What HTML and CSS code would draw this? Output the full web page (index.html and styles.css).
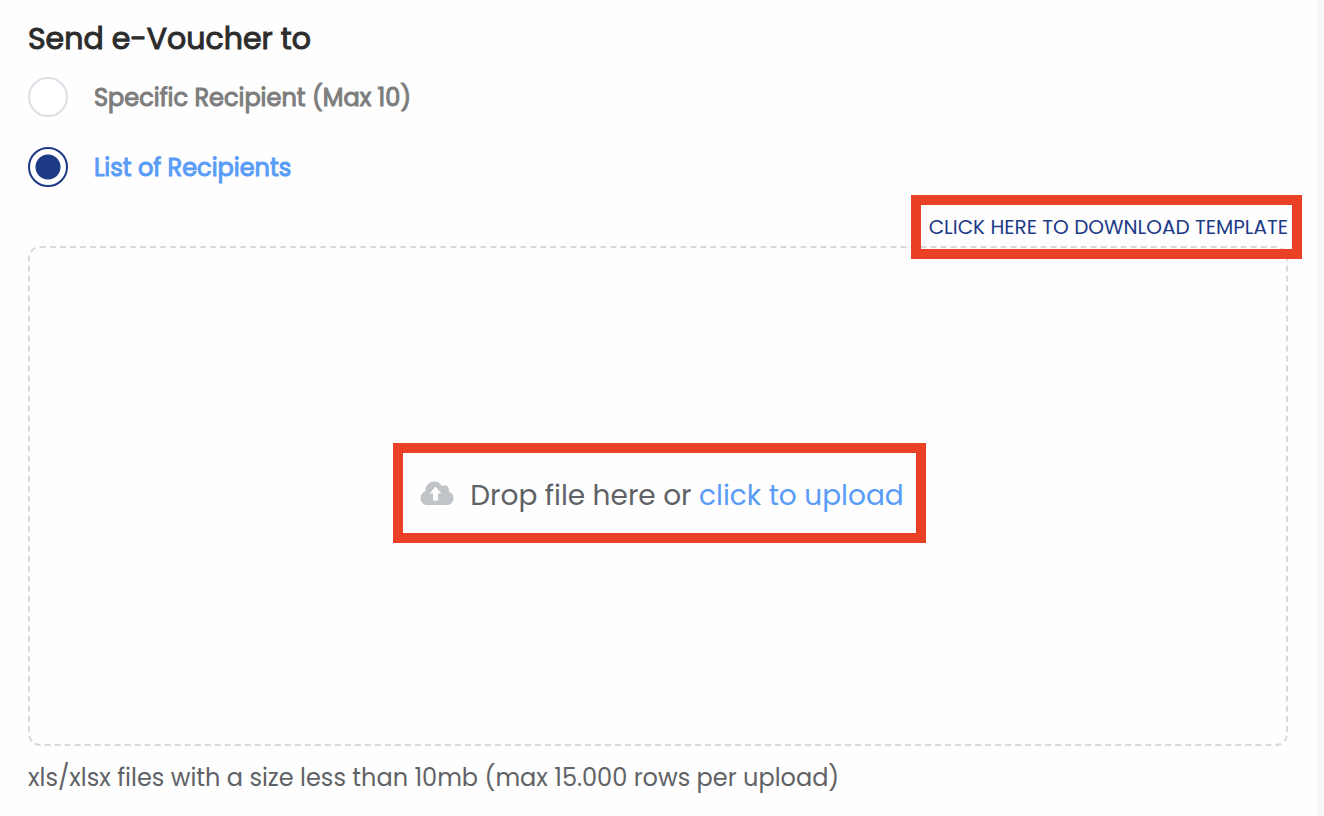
FILE: index.html
```html
<!DOCTYPE html>
<html lang="en">
<head>
  <meta charset="UTF-8">
  <meta name="viewport" content="width=device-width, initial-scale=1.0">
  <title>Send e-Voucher</title>
  <link rel="stylesheet" href="styles.css">
</head>
<body>
  <main class="panel">
    <h2 id="sendTo">Send e-Voucher to</h2>

    <div class="recipients" role="radiogroup" aria-labelledby="sendTo">
      <div class="option">
        <input type="radio" id="specific" name="recipient" value="specific">
        <label for="specific">Specific Recipient (Max 10)</label>
      </div>
      <div class="option">
        <input type="radio" id="list" name="recipient" value="list" checked>
        <label for="list">List of Recipients</label>
      </div>
    </div>

    <div class="template">
      <a href="#" class="template-link">CLICK HERE TO DOWNLOAD TEMPLATE</a>
    </div>

    <div class="dropzone">
      <div class="drop-message">
        <svg class="cloud" viewBox="0 0 34 24" aria-hidden="true">
          <path fill="#c0c4c8" d="M7.500 24C3.500 24 .5 21.100 .5 17.200C.5 13.900 2.500 11.400 5.300 10.300C5.300 4.500 9 .5 14 .5C17.800 .5 20.500 2.300 22 5.200C26 2.700 30 6.200 28.800 10.700C31.700 11.500 33.500 13.900 33.500 17.200C33.500 21.100 30.600 24 27 24Z"/>
          <path fill="#fff" d="M15.500 5.500L21.300 12.500H18V19.500H13V12.500H9.700Z"/>
        </svg>
        <p>Drop file here or <a href="#" class="upload-link">click to upload</a></p>
      </div>
    </div>

    <p class="hint">xls/xlsx files with a size less than 10mb (max 15.000 rows per upload)</p>
  </main>
</body>
</html>
```

FILE: styles.css
```css
* {
  margin: 0;
  padding: 0;
  box-sizing: border-box;
  font-family: Poppins, Inter, sans-serif;
}

body {
  background-color: #f4f6f8;
  color: #606266;
  min-height: 100vh;
  padding-right: 6px;
}

.panel {
  background: #fefefe;
  min-height: 100vh;
  padding: 17px 30px 18px 28px;
}

h2 {
  margin-bottom: 15px;
  font-size: 30px;
  font-weight: 400;
  line-height: 44px;
  color: #2c2c2c;
  -webkit-text-stroke: 1px;
}

a {
  text-decoration: none;
}

.recipients {
  display: flex;
  flex-direction: column;
  gap: 28px;
}

.option {
  display: flex;
  align-items: center;
  gap: 26px;
  font-size: 24px;
  color: #7d7d7d;
}

.option label {
  padding-top: 2px;
  line-height: 40px;
  -webkit-text-stroke: 1px;
}

.option input {
  appearance: none;
  width: 40px;
  height: 40px;
  border: 2px solid #dcdfe6;
  border-radius: 50%;
  background: #fff;
  cursor: pointer;
}

.option input:checked {
  border-color: #1d3a87;
  background: radial-gradient(circle, #1d3a87 12px, #fff 13px);
}

.option input:checked + label {
  color: #599cf8;
}

.template {
  display: flex;
  justify-content: flex-end;
  padding: 21px 0 1px;
}

.template-link {
  position: relative;
  font-size: 20px;
  line-height: 36px;
  color: #1d3a87;
}

/* red callout frames */
.template-link::after,
.drop-message::after {
  content: "";
  position: absolute;
  border: 10px solid #ea4025;
  pointer-events: none;
}

.template-link::after {
  inset: -14px -14px -14px -18px;
}

.dropzone {
  display: flex;
  justify-content: center;
  align-items: center;
  height: 500px;
  border: 2px dashed #d9d9d9;
  border-radius: 12px;
}

.drop-message {
  position: relative;
  display: flex;
  align-items: center;
  gap: 16px;
  padding-left: 8px;
  font-size: 28px;
  line-height: 44px;
}

.drop-message::after {
  inset: -31px -22px -25px -19px;
}

.cloud {
  width: 34px;
  height: 24px;
  margin-bottom: 6px;
}

.upload-link {
  color: #599cf8;
}

.hint {
  margin-top: 14px;
  font-size: 24px;
  line-height: 36px;
}
```
